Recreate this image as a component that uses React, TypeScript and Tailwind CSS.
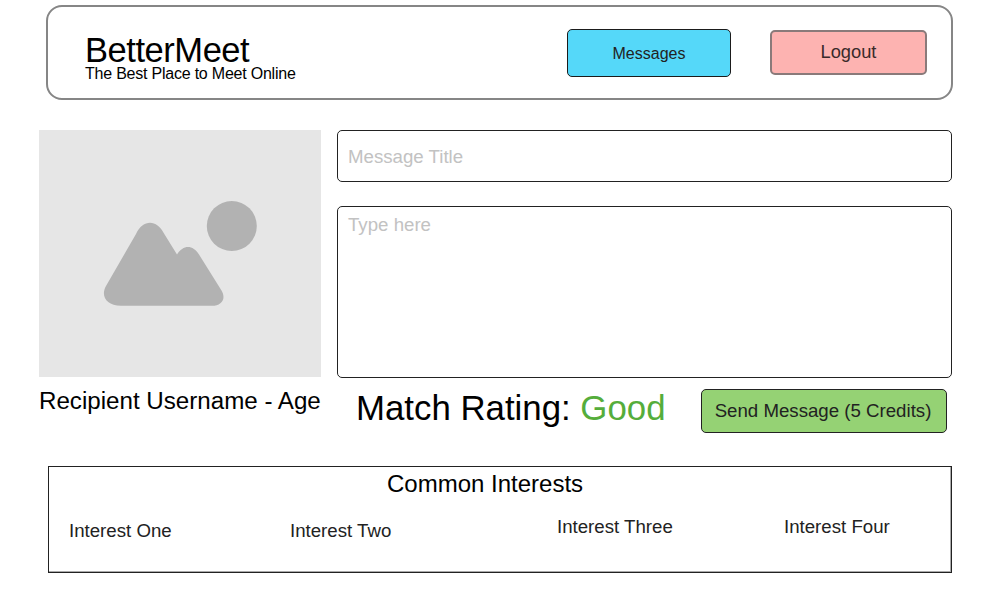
const interests = [
  { label: "Interest One", place: "ml-[20px] w-[221px] pt-[4px]" },
  { label: "Interest Two", place: "w-[267px] pt-[4px]" },
  { label: "Interest Three", place: "w-[227px]" },
  { label: "Interest Four", place: "" },
];

function Header() {
  return (
    <header className="ml-[46px] flex h-[95px] w-[907px] rounded-[16px] border-2 border-[#868686]">
      <div className="w-[519px] whitespace-nowrap pt-[26px] pl-[37px] text-black">
        <h1 className="text-[34.5px] leading-[34px] tracking-[-0.45px]">BetterMeet</h1>
        <p className="text-[16px] leading-[13px] tracking-[-0.22px]">The Best Place to Meet Online</p>
      </div>
      <button className="mt-[22px] h-[48px] w-[164px] rounded-[5px] border border-[#1b1b1b] bg-[#55d8f9] pt-[2px] text-[16px] leading-none">
        Messages
      </button>
      <button className="mt-[23px] ml-[39px] h-[45px] w-[157px] rounded-[5px] border-2 border-[#8a7a7a] bg-[#fdb3b1] text-[18.3px] leading-none text-[#3a2a2a]">
        Logout
      </button>
    </header>
  );
}

function PhotoPlaceholder() {
  return (
    <svg className="block h-[247px] w-[282px] bg-[#e6e6e6]" viewBox="0 0 282 247">
      <circle cx="192.8" cy="96" r="25" fill="#b2b2b2" />
      <path
        d="M67 156 L97 104 C104 89.500 117.500 89 125 103.500 L138 124.500 C144 114.500 154 114.500 160 124.500 L182.500 160.500 C187.500 169 182.500 175.700 173 175.700 H82 C67 175.700 61.500 165.500 67 156 Z"
        fill="#b2b2b2"
      />
    </svg>
  );
}

export default function App() {
  return (
    <main className="h-[600px] w-[986px] overflow-hidden bg-white pt-[5px] font-['Liberation_Sans',Arial,sans-serif] text-[#222]">
      <Header />
      <section className="mt-[30px] ml-[39px] flex">
        <div className="w-[298px]">
          <PhotoPlaceholder />
          <p className="mt-[10px] whitespace-nowrap text-[24.15px] leading-[28px] text-black">
            Recipient Username - Age
          </p>
        </div>
        <div className="w-[615px]">
          <input
            className="block h-[52px] w-full rounded-[5px] border border-[#222] px-[10px] pt-[2px] text-[18.67px] placeholder:text-[#c2c2c2]"
            placeholder="Message Title"
          />
          <textarea
            className="mt-[24px] block h-[172px] w-full resize-none rounded-[5px] border border-[#222] px-[10px] pt-[7px] text-[18.67px] leading-[22px] placeholder:text-[#c2c2c2]"
            placeholder="Type here"
          />
          <div className="mt-[10px] flex">
            <p className="w-[347px] pl-[19px] whitespace-nowrap text-[34.8px] leading-[40px] text-black">
              Match Rating: <span className="text-[#55ad3b]">Good</span>
            </p>
            <button className="mt-[1px] ml-[17px] h-[44px] w-[246px] rounded-[5px] border border-[#222] bg-[#95d274] pr-[2px] text-[18.67px] leading-none whitespace-nowrap">
              Send Message (5 Credits)
            </button>
          </div>
        </div>
      </section>
      <section className="mt-[33px] ml-[48px] h-[107px] w-[904px] border border-[#222] shadow-[inset_-1px_-1px_0_#aaa]">
        <h2 className="mt-[2px] pl-[338px] text-[24px] leading-[30px] text-black">Common Interests</h2>
        <ul className="mt-[17px] flex text-[18.67px] leading-[22px] whitespace-nowrap">
          {interests.map((interest) => (
            <li key={interest.label} className={interest.place}>
              {interest.label}
            </li>
          ))}
        </ul>
      </section>
    </main>
  );
}
